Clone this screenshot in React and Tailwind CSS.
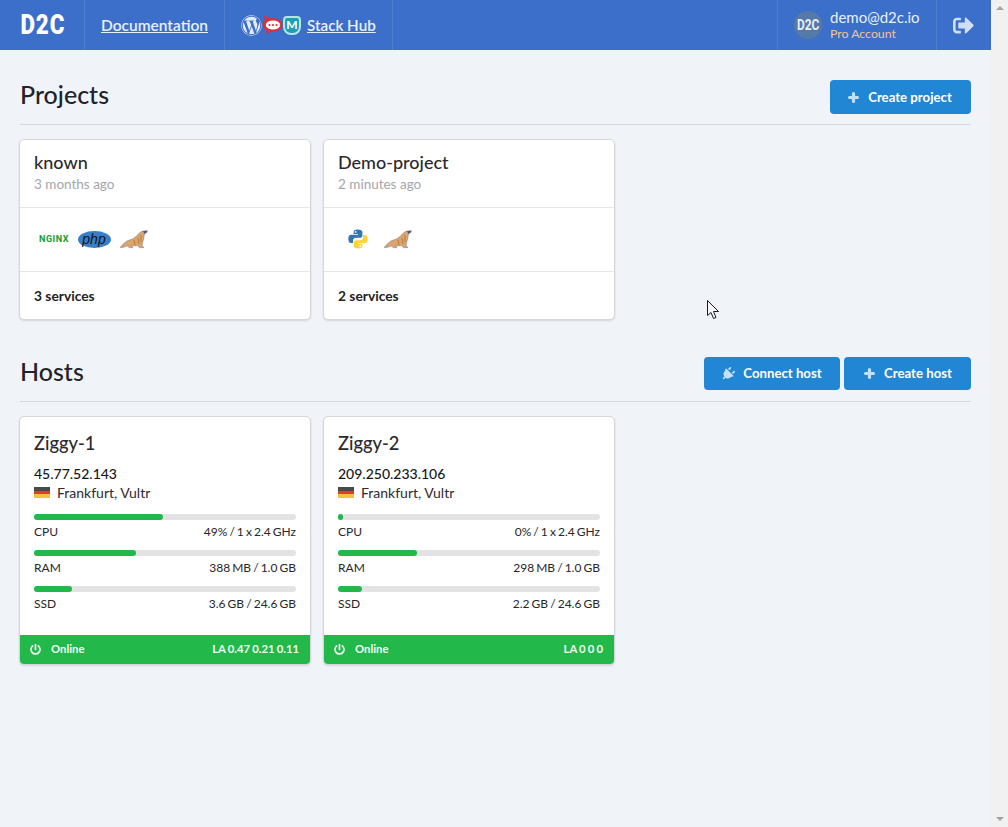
import { FaPlus, FaPlug, FaPowerOff, FaSignOutAlt, FaWordpress } from 'react-icons/fa';

const PROJECTS = [
  { name: 'known', age: '3 months ago', services: '3 services', stack: ['nginx', 'php', 'seal'] },
  { name: 'Demo-project', age: '2 minutes ago', services: '2 services', stack: ['python', 'seal'] },
];

const HOSTS = [
  {
    name: 'Ziggy-1',
    ip: '45.77.52.143',
    load: 'LA 0.47 0.21 0.11',
    stats: [
      { label: 'CPU', value: '49% / 1 x 2.4 GHz', width: '49.2%' },
      { label: 'RAM', value: '388 MB / 1.0 GB', width: '39%' },
      { label: 'SSD', value: '3.6 GB / 24.6 GB', width: '14.6%' },
    ],
  },
  {
    name: 'Ziggy-2',
    ip: '209.250.233.106',
    load: 'LA 0 0 0',
    stats: [
      { label: 'CPU', value: '0% / 1 x 2.4 GHz', width: '2%' },
      { label: 'RAM', value: '298 MB / 1.0 GB', width: '30%' },
      { label: 'SSD', value: '2.2 GB / 24.6 GB', width: '9%' },
    ],
  },
];

function Seal() {
  return (
    <svg width="28" height="19" viewBox="0 0 28 19">
      <path
        d="M0.5 17 C3 14 5 12 8 10.5 C11 9.5 14 8.5 16 6.5 C18 4.5 20 1.5 23 1 L27.5 0.8 L26.5 2.5 L24.5 4 C24 7 23.5 10 22.5 13 L22 16 L24 17.5 L19.5 17.8 L18 15.5 C15.5 16 13 15.8 11.5 16 L13 17.8 L9 17.6 L8 15.8 C5.5 16.5 3 17.5 0.5 17.8 Z"
        fill="#dba56c"
        stroke="#77708c"
        strokeWidth="0.5"
      />
      <path d="M23 1 L27.5 0.8 L26.5 2.5 L24.5 4 Z" fill="#4a5a8c" />
      <path d="M14 10 L15 15 M18 8 L19 14 M21 5 L21 12" stroke="#a9713c" strokeWidth="0.8" />
    </svg>
  );
}

function Python() {
  return (
    <svg width="20" height="20" viewBox="0 0 20 20">
      <path
        d="M9.8 0.5 C6.5 0.5 5.6 1.6 5.6 3.2 V5 H10 V5.8 H3.2 C1.4 5.8 0.3 7.2 0.3 9.8 C0.3 12.6 1.4 14 3 14 H5 V11.5 C5 9.8 6.4 8.8 8 8.8 H12 C13.4 8.8 14.4 7.8 14.4 6.4 V3.2 C14.4 1.5 12.6 0.5 9.8 0.5 Z"
        fill="#3776ab"
      />
      <path
        d="M10.2 19.5 C13.5 19.5 14.4 18.4 14.4 16.8 V15 H10 V14.2 H16.8 C18.6 14.2 19.7 12.8 19.7 10.2 C19.7 7.4 18.6 6 17 6 H15 V8.5 C15 10.2 13.6 11.2 12 11.2 H8 C6.6 11.2 5.6 12.2 5.6 13.6 V16.8 C5.6 18.5 7.4 19.5 10.2 19.5 Z"
        fill="#ffd43b"
      />
      <circle cx="7.6" cy="2.9" r="0.9" fill="#fff" />
      <circle cx="12.4" cy="17.1" r="0.9" fill="#fff" />
    </svg>
  );
}

function RocketChat() {
  return (
    <svg width="21" height="20" viewBox="0 0 21 20">
      <path d="M2 0.5 L8 3 C14 2.5 20.5 5 20.5 10 C20.5 14.5 15 17 9.5 16.5 L4.5 19.5 L4.5 15 C1.5 13.5 0.5 11.5 0.5 9.5 C0.5 7.5 1.5 6.5 3 5 Z" fill="#d8303c" />
      <ellipse cx="11" cy="10" rx="7.2" ry="4.6" fill="#fff" />
      <circle cx="7.5" cy="10" r="1.1" fill="#d8303c" />
      <circle cx="11" cy="10" r="1.1" fill="#d8303c" />
      <circle cx="14.5" cy="10" r="1.1" fill="#d8303c" />
    </svg>
  );
}

function StackIcon({ kind }) {
  if (kind === 'nginx') {
    return <span className="font-['Roboto',sans-serif] text-[9px] leading-none font-bold tracking-[0.5px] text-[#149c2c]">NGINX</span>;
  }
  if (kind === 'php') {
    return (
      <span className="flex h-[17px] w-[33px] items-center justify-center rounded-[50%] bg-[#3a7ec6] font-['Liberation_Sans',sans-serif] text-[14px] leading-none text-[#10151f] italic">
        php
      </span>
    );
  }
  if (kind === 'python') return <Python />;
  return <Seal />;
}

function PrimaryButton({ icon, children, className }) {
  return (
    <button type="button" className={`flex items-center justify-center rounded-[4px] bg-[#2186d4] text-[13.2px] font-bold text-white ${className}`}>
      <span className="mr-[9px] flex w-[12px] justify-center text-[#c4e0f5]">{icon}</span>
      {children}
    </button>
  );
}

function SectionHeader({ title, children }) {
  return (
    <div className="flex h-[45px] items-start justify-between border-b border-[#d5d8dd]">
      <h2 className="text-[25px] leading-[29px] font-medium text-[#22222a]">{title}</h2>
      <div className="flex gap-[4px]">{children}</div>
    </div>
  );
}

function ProjectCard({ project }) {
  return (
    <div className="h-[181px] w-[292px] rounded-[5px] border border-[#d3d6db] bg-white shadow-[0_1px_2px_rgba(0,0,0,0.12)]">
      <div className="h-[68px] border-b border-[#e4e6e8] px-[14px] pt-[10px]">
        <div className="text-[18px] leading-[24px] font-medium text-[#2a2a2e]">{project.name}</div>
        <div className="mt-[1px] text-[13.5px] leading-[18px] text-[#a3a7ac]">{project.age}</div>
      </div>
      <div className="flex h-[64px] items-center border-b border-[#e4e6e8] px-[14px] pb-[1px]">
        {project.stack.map((kind) => (
          <div key={kind} className="flex w-[40px] justify-center">
            <StackIcon kind={kind} />
          </div>
        ))}
      </div>
      <div className="px-[14px] pt-[15px] text-[13.8px] leading-[18px] font-bold text-[#222]">{project.services}</div>
    </div>
  );
}

function HostCard({ host }) {
  return (
    <div className="flex h-[249px] w-[292px] flex-col overflow-hidden rounded-[5px] border border-[#d3d6db] bg-white shadow-[0_1px_2px_rgba(0,0,0,0.12)]">
      <div className="flex-1 px-[14px] pt-[13px]">
        <div className="text-[18.3px] leading-[26px] font-medium text-[#2a2a2e]">{host.name}</div>
        <div className="mt-[9px] text-[14px] leading-[18px] font-medium text-[#16161a]">{host.ip}</div>
        <div className="flex h-[19px] items-center text-[14px] text-[#2b2b30]">
          <span className="mr-[7px] flex h-[11px] w-[16px] flex-col">
            <span className="flex-1 bg-[#4a4a4a]" />
            <span className="flex-1 bg-[#d8402c]" />
            <span className="flex-1 bg-[#f0c33c]" />
          </span>
          Frankfurt, Vultr
        </div>
        <div className="mt-[12px] flex flex-col gap-[8px]">
          {host.stats.map((stat) => (
            <div key={stat.label}>
              <div className="h-[6px] rounded-full bg-[#e3e3e3]">
                <div className="h-full rounded-full bg-[#22b84a]" style={{ width: stat.width }} />
              </div>
              <div className="mt-[1px] flex justify-between text-[12px] leading-[21px] text-[#26262b]">
                <span>{stat.label}</span>
                <span className="[word-spacing:-1px]">{stat.value}</span>
              </div>
            </div>
          ))}
        </div>
      </div>
      <div className="flex h-[29px] items-center justify-between bg-[#22b84a] pr-[11px] pb-[1px] pl-[10px] text-[11.3px] font-bold text-[#f1fbf3]">
        <span className="flex items-center">
          <FaPowerOff className="mr-[10px] text-[11px]" />
          Online
        </span>
        <span className="[word-spacing:-0.6px]">{host.load}</span>
      </div>
    </div>
  );
}

export default function App() {
  return (
    <div className="relative flex h-[827px] w-[1008px] overflow-hidden bg-[#f0f4f9] font-['Lato',sans-serif]">
      <div className="w-[991px]">
        <header className="flex h-[50px] items-stretch bg-[#3b6fc9] text-white">
          <div className="flex w-[85px] items-center justify-center border-r border-[#4f7dcf] pl-[1px]">
            <span className="origin-center scale-x-[0.8] font-['Roboto',sans-serif] text-[28px] leading-none font-black tracking-[1px]">D2C</span>
          </div>
          <a className="flex w-[140px] items-center justify-center border-r border-[#4f7dcf] pt-[1px] text-[15.5px] font-semibold text-[#e8effa] underline">Documentation</a>
          <a className="flex w-[168px] items-center border-r border-[#4f7dcf] pl-[16px] text-[15.2px] font-semibold text-[#e8effa]">
            <FaWordpress className="text-[21px] text-[#e4ebf8]" />
            <RocketChat />
            <span className="flex h-[19px] w-[18px] items-center justify-center rounded-t-[4px] rounded-b-[8px] border-2 border-[#b5e4ea] bg-[#1f9fb3] text-[12px] leading-none font-bold text-white">M</span>
            <span className="ml-[6px] pt-[1px] underline">Stack Hub</span>
          </a>
          <div className="ml-auto flex w-[159px] items-center border-l border-[#4f7dcf] pl-[16px]">
            <span className="flex h-[28px] w-[28px] items-center justify-center rounded-full bg-[#557aa8] font-['Roboto',sans-serif] text-[14px] leading-none font-bold text-[#e8eef6]">
              <span className="scale-x-[0.85]">D2C</span>
            </span>
            <div className="ml-[8px]">
              <div className="text-[15px] leading-[17px] text-[#e8effa]">demo@d2c.io</div>
              <div className="text-[12.3px] leading-[16px] text-[#f4c58f]">Pro Account</div>
            </div>
          </div>
          <div className="flex w-[55px] items-center justify-center border-l border-[#4f7dcf] pr-[2px]">
            <FaSignOutAlt className="text-[21px] text-[#cfe0f6]" />
          </div>
        </header>

        <main className="px-[20px]">
          <section className="pt-[30px]">
            <SectionHeader title="Projects">
              <PrimaryButton icon={<FaPlus strokeWidth={50} className="text-[11px]" />} className="h-[34px] w-[141px] pt-[1px] pr-[2px]">Create project</PrimaryButton>
            </SectionHeader>
            <div className="mt-[14px] -ml-[1px] flex gap-[12px]">
              {PROJECTS.map((project) => (
                <ProjectCard key={project.name} project={project} />
              ))}
            </div>
          </section>

          <section className="pt-[37px]">
            <SectionHeader title="Hosts">
              <PrimaryButton icon={<FaPlug className="rotate-45 text-[14px]" />} className="h-[33px] w-[136px]">Connect host</PrimaryButton>
              <PrimaryButton icon={<FaPlus strokeWidth={50} className="text-[11px]" />} className="h-[33px] w-[127px]">Create host</PrimaryButton>
            </SectionHeader>
            <div className="mt-[14px] -ml-[1px] flex gap-[12px]">
              {HOSTS.map((host) => (
                <HostCard key={host.name} host={host} />
              ))}
            </div>
          </section>
        </main>
      </div>

      <aside className="flex w-[17px] flex-col items-center justify-between bg-[#f1f1f1] py-[6px]">
        <span className="h-0 w-0 border-x-[4px] border-b-[4px] border-x-transparent border-b-[#a3a3a3]" />
        <span className="h-0 w-0 border-x-[4px] border-t-[4px] border-x-transparent border-t-[#a3a3a3]" />
      </aside>

      <svg className="absolute top-[300px] left-[707px]" width="14" height="20" viewBox="0 0 14 20">
        <path d="M0.5 0.5 V15.5 L4 12.5 L6.5 18.5 L9 17.5 L6.5 11.5 H11.5 Z" fill="#f4f6fa" stroke="#1a1a1a" strokeWidth="1" />
      </svg>
    </div>
  );
}
